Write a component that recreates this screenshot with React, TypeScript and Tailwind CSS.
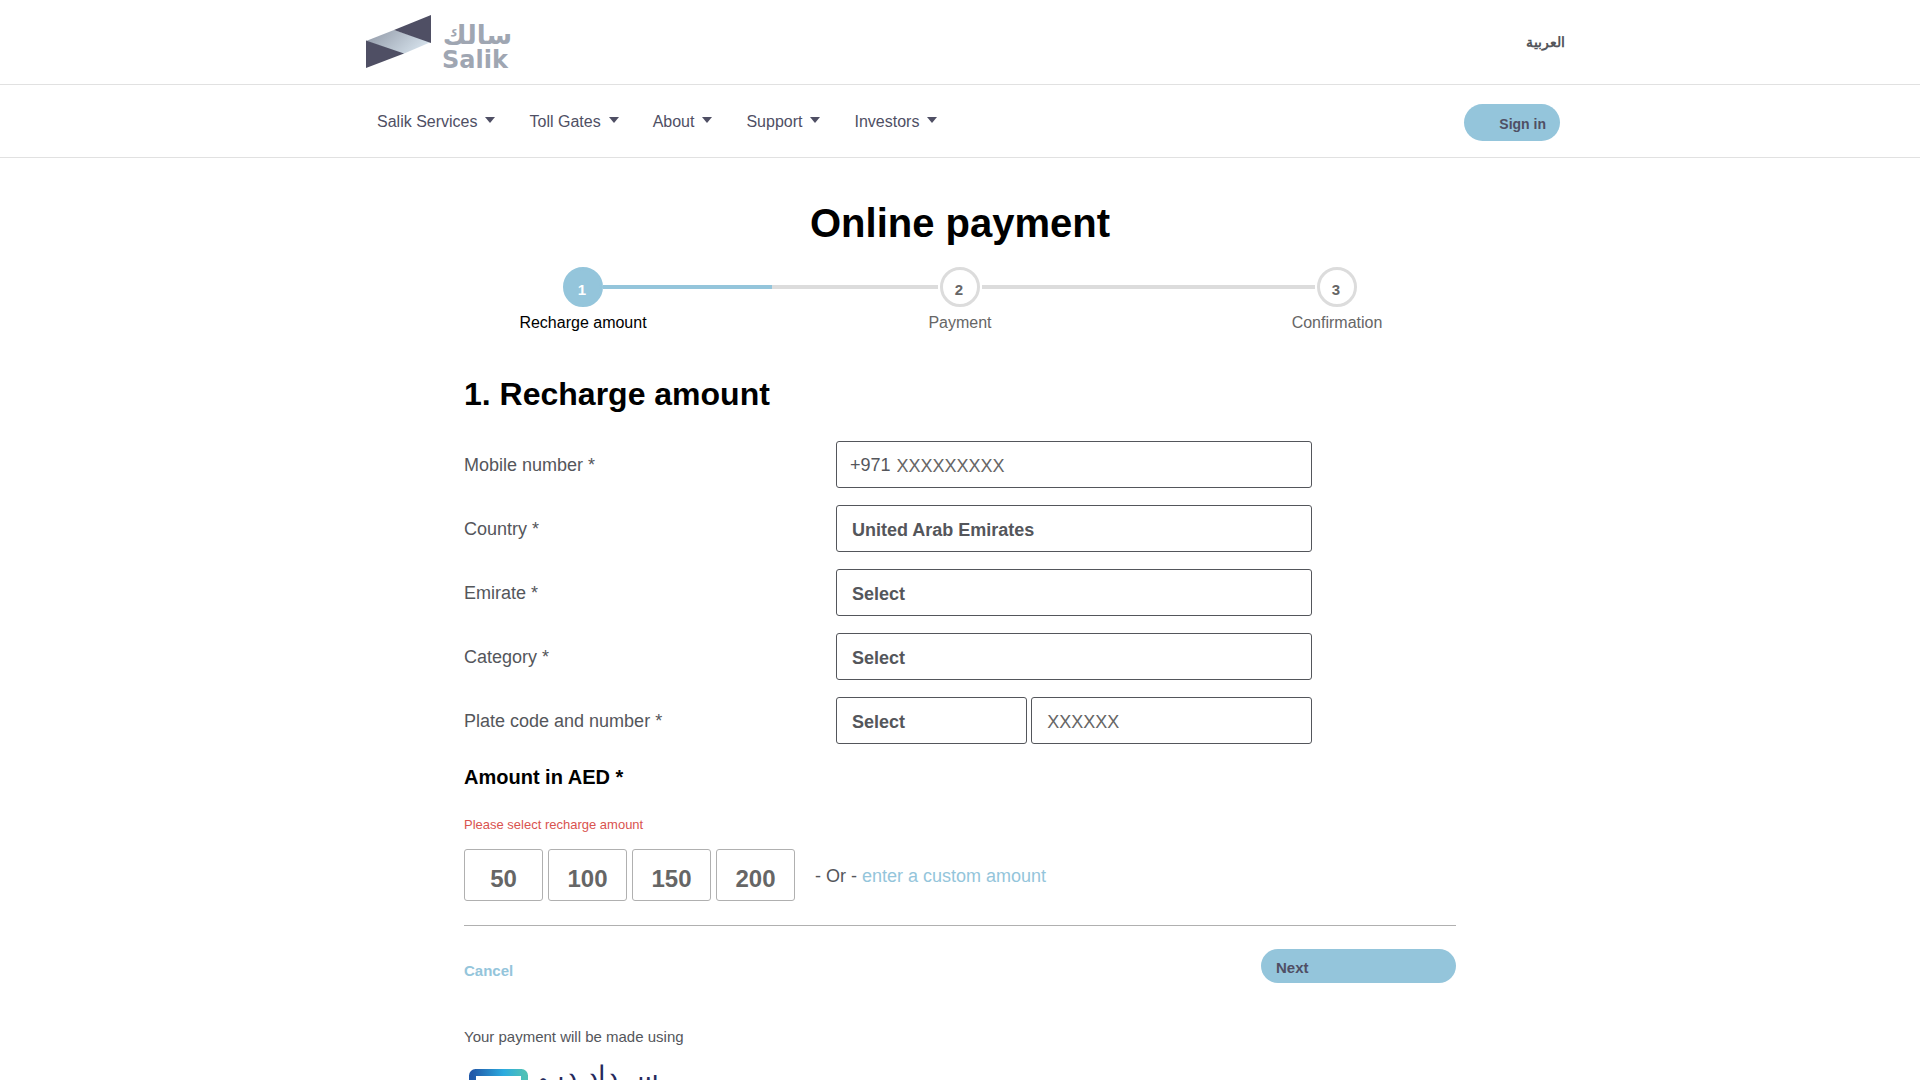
import { useState, type ReactNode } from "react";
import clsx from "clsx";

const navLinks = ["Salik Services", "Toll Gates", "About", "Support", "Investors"];

const steps = ["Recharge amount", "Payment", "Confirmation"];

const amounts = [50, 100, 150, 200];

const fieldClass =
    "h-[47px] min-w-0 appearance-none rounded-[3px] border border-[#54565b] bg-white px-[15px] text-lg leading-6 text-[#54565b] outline-none placeholder:text-[#666666]";

function SalikLogo() {
    return (
        <svg width="150" height="60" viewBox="0 0 150 60" className="overflow-visible" role="img" aria-label="Salik">
            <defs>
                <linearGradient id="band" x1="0" y1="0" x2="1" y2="0.4">
                    <stop offset="0" stopColor="#8f97a5" />
                    <stop offset="1" stopColor="#d3dfe9" />
                </linearGradient>
            </defs>
            <path d="M0 29 28 18 65 30 37 42Z" fill="url(#band)" />
            <path d="M28 18 65 3V31Z" fill="#4f4f64" />
            <path d="M0 28.500 38 41.500 0 56Z" fill="#4f4f64" />
            <text x="146" y="32" direction="rtl" fontFamily="DejaVu Sans, sans-serif" fontWeight="700" fontSize="26" fill="#9fa6b2">
                سالك
            </text>
            <text x="76" y="56" fontFamily="DejaVu Sans, sans-serif" fontWeight="700" fontSize="24" fill="#9fa6b2">
                Salik
            </text>
        </svg>
    );
}

function DubaiPayLogo() {
    return (
        <svg width="200" height="64" viewBox="0 0 200 64" className="overflow-visible" role="img" aria-label="سداد دبي">
            <defs>
                <linearGradient id="frame" x1="0" y1="0" x2="1" y2="0">
                    <stop offset="0" stopColor="#2158a8" />
                    <stop offset="0.600" stopColor="#2cabdf" />
                    <stop offset="1" stopColor="#4fc1b6" />
                </linearGradient>
            </defs>
            <rect x="8.500" y="9.500" width="52" height="50" rx="3" fill="none" stroke="url(#frame)" strokeWidth="7" />
            <text x="195" y="22" direction="rtl" fontFamily="DejaVu Sans, sans-serif" fontWeight="200" fontSize="27" fill="#262a5c">
                ســداد دبـي
            </text>
        </svg>
    );
}

function Header() {
    return (
        <header>
            <div className="border-b border-[#e1e1e1]">
                <div className="mx-auto flex h-[84px] max-w-[1210px] items-center justify-between pl-[11px]">
                    <a href="#home">
                        <SalikLogo />
                    </a>
                    <a href="#ar" lang="ar" className="text-sm font-bold text-[#54565b]">
                        العربية
                    </a>
                </div>
            </div>
            <div className="border-b border-[#e1e1e1]">
                <div className="mx-auto flex h-[72px] max-w-[1200px] items-center justify-between pt-0.5 pl-[17px]">
                    <nav className="flex gap-[34px]">
                        {navLinks.map((link) => (
                            <a key={link} href="#menu" className="flex items-center gap-2 text-base text-[#4f4f64]">
                                {link}
                                <svg width="10" height="10" viewBox="0 0 10 10" fill="currentColor" aria-hidden="true">
                                    <path d="M0 0h10L5 6z" />
                                </svg>
                            </a>
                        ))}
                    </nav>
                    <button type="button" className="h-[37px] w-24 rounded-full bg-[#94c5db] pt-1 pr-3.5 text-right text-sm font-bold text-[#4f4f64]">
                        Sign in
                    </button>
                </div>
            </div>
        </header>
    );
}

function Stepper() {
    return (
        <ol className="mx-auto mt-5 grid max-w-[1131px] grid-cols-3">
            {steps.map((step, i) => (
                <li key={step} className="flex flex-col items-center gap-1">
                    <div className={clsx("flex w-full items-center", i > 0 && "gap-0.5")}>
                        <span className={clsx("h-1 flex-1", i > 0 && "bg-[#dcdcdc]")} />
                        <span
                            className={clsx(
                                "flex size-10 items-center justify-center rounded-full border-[3px] pt-1.5 pr-0.5 text-[15px] font-bold",
                                i === 0 ? "border-[#94c5db] bg-[#94c5db] text-white" : "border-[#dcdcdc] text-[#666666]"
                            )}
                        >
                            {i + 1}
                        </span>
                        <span className={clsx("h-1 flex-1", i === 0 && "bg-[#94c5db]", i === 1 && "bg-[#dcdcdc]")} />
                    </div>
                    <span className={clsx("text-base", i === 0 ? "text-black" : "text-[#666666]")}>{step}</span>
                </li>
            ))}
        </ol>
    );
}

function Row({ id, label, children }: { id: string; label: string; children: ReactNode }) {
    return (
        <div className="flex items-center">
            <label htmlFor={id} className="w-[37.5%] text-lg text-[#54565b]">
                {label} *
            </label>
            <div className="flex w-[48%] gap-1">{children}</div>
        </div>
    );
}

export default function App() {
    const [amount, setAmount] = useState<number | null>(null);

    return (
        <div className="bg-white font-['Liberation_Sans',Arial,sans-serif] text-[#54565b]">
            <Header />
            <main className="pt-[41px]">
                <h1 className="text-center text-[40px] leading-[48px] font-bold text-black">Online payment</h1>
                <Stepper />

                <form className="mx-auto mt-[39px] max-w-[992px]" onSubmit={(e) => e.preventDefault()}>
                    <h2 className="text-[32px] leading-10 font-bold text-black">1. Recharge amount</h2>

                    <div className="mt-[27px] flex flex-col gap-[17px]">
                        <Row id="mobile" label="Mobile number">
                            <div className="flex h-[47px] w-full items-center gap-1.5 rounded-[3px] border border-[#54565b] pl-[13px] text-lg">
                                <span>+971</span>
                                <input
                                    id="mobile"
                                    type="tel"
                                    placeholder="XXXXXXXXX"
                                    className="min-w-0 flex-1 pt-0.5 outline-none placeholder:text-[#666666]"
                                />
                            </div>
                        </Row>
                        <Row id="country" label="Country">
                            <select id="country" className={clsx(fieldClass, "w-full pt-0.5 font-bold")}>
                                <option>United Arab Emirates</option>
                            </select>
                        </Row>
                        <Row id="emirate" label="Emirate">
                            <select id="emirate" className={clsx(fieldClass, "w-full pt-0.5 font-bold")}>
                                <option>Select</option>
                            </select>
                        </Row>
                        <Row id="category" label="Category">
                            <select id="category" className={clsx(fieldClass, "w-full pt-0.5 font-bold")}>
                                <option>Select</option>
                            </select>
                        </Row>
                        <Row id="plate-code" label="Plate code and number">
                            <select id="plate-code" className={clsx(fieldClass, "flex-1 pt-0.5 font-bold")}>
                                <option>Select</option>
                            </select>
                            <input type="text" aria-label="Plate number" placeholder="XXXXXX" className={clsx(fieldClass, "w-[59%] pt-1")} />
                        </Row>
                    </div>

                    <h3 className="mt-[21px] text-xl leading-6 font-bold text-black">Amount in AED *</h3>
                    <p className="mt-[26px] text-[13px] leading-5 text-[#d9534f]">Please select recharge amount</p>

                    <div className="mt-3.5 flex items-center">
                        <div className="flex gap-[5px]">
                            {amounts.map((value) => (
                                <button
                                    key={value}
                                    type="button"
                                    aria-pressed={amount === value}
                                    onClick={() => setAmount(value)}
                                    className="h-[52px] w-[79px] rounded-[3px] border border-[#b0b0b0] pt-2 text-2xl font-bold text-[#666666] aria-pressed:border-[#94c5db]"
                                >
                                    {value}
                                </button>
                            ))}
                        </div>
                        <p className="pt-0.5 pl-5 text-lg">
                            - Or -{" "}
                            <a href="#custom" className="text-[#94c5db]">
                                enter a custom amount
                            </a>
                        </p>
                    </div>

                    <hr className="mt-6 border-[#b0b0b0]" />

                    <div className="mt-[23px] flex items-end justify-between">
                        <a href="#cancel" className="pb-0.5 text-[15px] leading-5 font-bold text-[#94c5db]">
                            Cancel
                        </a>
                        <button type="submit" className="h-[34px] w-[195px] rounded-full bg-[#94c5db] px-[15px] pt-1 text-left text-[15px] leading-5 font-bold text-[#4f4f64]">
                            Next
                        </button>
                    </div>

                    <p className="mt-11 text-[15px] leading-5">Your payment will be made using</p>
                    <div className="mt-4">
                        <DubaiPayLogo />
                    </div>
                </form>
            </main>
        </div>
    );
}
